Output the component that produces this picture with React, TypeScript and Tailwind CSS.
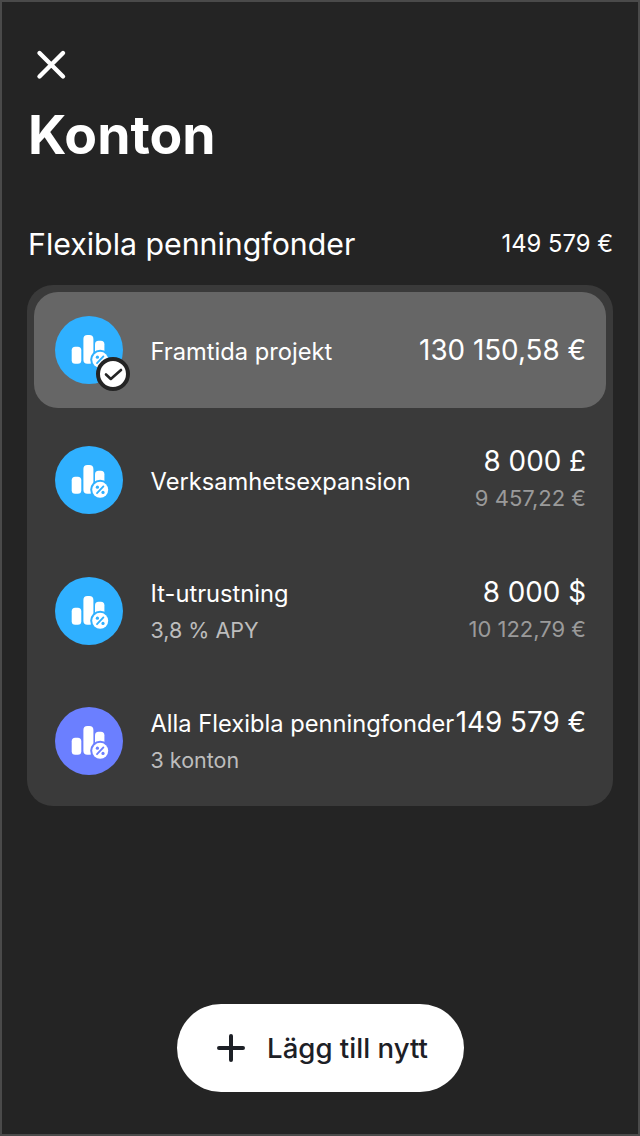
import React from 'react';

const font = { fontFamily: 'Inter, sans-serif' };

const FundIcon: React.FC<{ color: string; cut: string; selected?: boolean }> = ({ color, cut, selected }) => (
  <div className={`relative w-[68px] h-[68px] shrink-0 rounded-full ${color}`}>
    <svg width="68" height="68" viewBox="0 0 68 68" fill="none">
      <rect x="16.7" y="30.7" width="9.6" height="17" rx="3.5" fill="#fff" />
      <rect x="28.4" y="19" width="10" height="28.7" rx="4" fill="#fff" />
      <rect x="40" y="24.7" width="9.4" height="23" rx="3.5" fill="#fff" />
      <circle cx="45.2" cy="43.8" r="10" fill={cut} />
      <circle cx="45.2" cy="43.8" r="8" fill="#fff" />
      <path d="M48.4 40.4 42 47.2" stroke={cut} strokeWidth="1.8" strokeLinecap="round" />
      <circle cx="42.4" cy="41.2" r="1.6" fill={cut} />
      <circle cx="48" cy="46.4" r="1.6" fill={cut} />
    </svg>
    {selected && (
      <div className="absolute left-[41px] top-[41px] w-[34px] h-[34px] rounded-full bg-white border-[4px] border-[#242424] flex items-center justify-center">
        <svg width="21" height="21" viewBox="0 0 21 21" fill="none">
          <path d="M3 10.5 7.8 15 18 6" stroke="#242424" strokeWidth="2.6" strokeLinecap="round" strokeLinejoin="round" />
        </svg>
      </div>
    )}
  </div>
);

type Row = { name: string; sub?: string; amount: string; converted?: string; color: string; cut: string; selected?: boolean };

const rows: Row[] = [
  { name: 'Framtida projekt', amount: '130 150,58 €', color: 'bg-[#2fb0ff]', cut: '#2fb0ff', selected: true },
  { name: 'Verksamhetsexpansion', amount: '8 000 £', converted: '9 457,22 €', color: 'bg-[#2fb0ff]', cut: '#2fb0ff' },
  { name: 'It-utrustning', sub: '3,8 % APY', amount: '8 000 $', converted: '10 122,79 €', color: 'bg-[#2fb0ff]', cut: '#2fb0ff' },
  { name: 'Alla Flexibla penningfonder', sub: '3 konton', amount: '149 579 €', color: 'bg-[#6b7fff]', cut: '#6b7fff' },
];

export default function App() {
  return (
    <div style={font} className="w-[640px] h-[1136px] bg-[#242424] border-2 border-[#4a4a4a] flex flex-col text-white overflow-hidden">
      <div className="pl-[26px] pr-[26px] pt-[46px] flex flex-col">
        <svg width="34" height="34" viewBox="0 0 34 34" fill="none" className="ml-[6px]">
          <path d="M5.5 5 29 28.5M29 5 5.5 28.5" stroke="#fff" strokeWidth="4.4" strokeLinecap="round" />
        </svg>
        <h1 className="text-[53.5px] leading-[62px] font-bold mt-[22px]">Konton</h1>
        <div className="flex items-center justify-between mt-[58px] pb-[21px]">
          <span className="text-[30.3px] leading-[40px] font-normal">Flexibla penningfonder</span>
          <span className="text-[23.8px] leading-[32px] font-normal mr-[-1px]">149 579 €</span>
        </div>
      </div>
      <div className="mx-[25px] bg-[#3a3a3a] rounded-[26px] p-[7px] flex flex-col gap-[14.3px]">
        {rows.map((r) => (
          <div key={r.name} className={`h-[116px] rounded-[24px] pl-[21px] pr-[20px] flex items-center ${r.selected ? 'bg-[#666666]' : ''}`}>
            <FundIcon color={r.color} cut={r.cut} selected={r.selected} />
            <div className={`ml-[27.5px] flex flex-col gap-[6px] whitespace-nowrap ${r.sub ? '' : 'pt-[3px]'}`}>
              <span className="text-[23.7px] leading-[32px] font-normal">{r.name}</span>
              {r.sub && <span className="text-[21.5px] leading-[28px] text-[#bdbdbd]">{r.sub}</span>}
            </div>
            <div className={`ml-auto flex flex-col items-end gap-[6px] whitespace-nowrap ${r.converted || r.sub ? 'mb-[4px]' : ''}`}>
              <span className="text-[27.8px] leading-[34px]">{r.amount}</span>
              {(r.converted || r.sub) && <span className="h-[28px] text-[22px] leading-[28px] text-[#9a9a9a]">{r.converted}</span>}
            </div>
          </div>
        ))}
      </div>
      <div className="mt-auto mb-[42px] flex justify-center">
        <button className="w-[287px] h-[88px] rounded-full bg-white flex items-center justify-center gap-[21px] pl-[4px] text-[#1d2026]">
          <svg width="30" height="30" viewBox="0 0 30 30" fill="none">
            <path d="M15 3v24M3 15h24" stroke="#1d2026" strokeWidth="4" strokeLinecap="round" />
          </svg>
          <span className="text-[27.6px] leading-[36px] font-medium">Lägg till nytt</span>
        </button>
      </div>
    </div>
  );
}
